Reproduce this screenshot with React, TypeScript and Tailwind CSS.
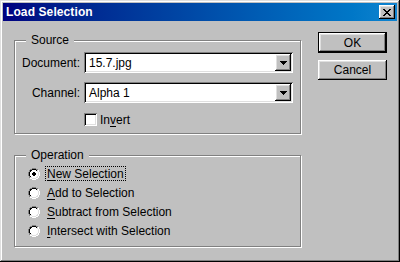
import React from "react";

const raised =
  "shadow-[inset_-1px_-1px_0_#000,inset_1px_1px_0_#fff,inset_-2px_-2px_0_#808080,inset_2px_2px_0_#dfdfdf]";
const sunken =
  "shadow-[inset_1px_1px_0_#808080,inset_-1px_-1px_0_#fff,inset_2px_2px_0_#000,inset_-2px_-2px_0_#dfdfdf]";

function CloseGlyph() {
  const rows = [
    "XX....XX",
    ".XX..XX.",
    "..XXXX..",
    "...XX...",
    "..XXXX..",
    ".XX..XX.",
    "XX....XX",
  ];
  const rects: React.ReactElement[] = [];
  rows.forEach((r, y) =>
    r.split("").forEach((c, x) => {
      if (c === "X") rects.push(<rect key={`${x}-${y}`} x={x} y={y} width={1} height={1} fill="#000" />);
    })
  );
  return (
    <svg width="8" height="7" viewBox="0 0 8 7" shapeRendering="crispEdges">
      {rects}
    </svg>
  );
}

function Arrow() {
  return (
    <svg width="7" height="4" viewBox="0 0 7 4" shapeRendering="crispEdges">
      <rect x="0" y="0" width="7" height="1" fill="#000" />
      <rect x="1" y="1" width="5" height="1" fill="#000" />
      <rect x="2" y="2" width="3" height="1" fill="#000" />
      <rect x="3" y="3" width="1" height="1" fill="#000" />
    </svg>
  );
}

function Radio({ checked }: { checked?: boolean }) {
  const outer: [number, number][] = [];
  const inner: [number, number][] = [];
  const add = (arr: [number, number][], y: number, xs: number[]) => xs.forEach((x) => arr.push([x, y]));
  add(outer, 0, [4, 5, 6, 7]);
  add(outer, 1, [2, 3, 8, 9]);
  add(outer, 2, [1, 10]);
  add(outer, 3, [1, 10]);
  for (let y = 4; y <= 7; y++) add(outer, y, [0, 11]);
  add(outer, 8, [1, 10]);
  add(outer, 9, [1, 10]);
  add(outer, 10, [2, 3, 8, 9]);
  add(outer, 11, [4, 5, 6, 7]);

  add(inner, 1, [4, 5, 6, 7]);
  add(inner, 2, [2, 3, 8, 9]);
  add(inner, 3, [2, 9]);
  for (let y = 4; y <= 7; y++) add(inner, y, [1, 10]);
  add(inner, 8, [2, 9]);
  add(inner, 9, [2, 3, 8, 9]);
  add(inner, 10, [4, 5, 6, 7]);

  const fill: [number, number, number][] = [
    [2, 4, 4],
    [3, 3, 6],
    [4, 2, 8],
    [5, 2, 8],
    [6, 2, 8],
    [7, 2, 8],
    [8, 3, 6],
    [9, 4, 4],
  ];
  return (
    <svg width="12" height="12" viewBox="0 0 12 12" shapeRendering="crispEdges" className="shrink-0">
      {fill.map(([y, x, w]) => (
        <rect key={`f${y}`} x={x} y={y} width={w} height={1} fill="#fff" />
      ))}
      {outer.map(([x, y]) => (
        <rect key={`o${x}-${y}`} x={x} y={y} width={1} height={1} fill={x + y <= 10 ? "#808080" : "#fff"} />
      ))}
      {inner.map(([x, y]) => (
        <rect key={`i${x}-${y}`} x={x} y={y} width={1} height={1} fill={x + y <= 10 ? "#000" : "#dfdfdf"} />
      ))}
      {checked && (
        <g fill="#000">
          <rect x="5" y="4" width="2" height="1" />
          <rect x="4" y="5" width="4" height="2" />
          <rect x="5" y="7" width="2" height="1" />
        </g>
      )}
    </svg>
  );
}

function Combo({ value }: { value: string }) {
  return (
    <div className={`ml-[4px] w-[209px] h-[21px] bg-white flex items-center justify-between pl-[5px] pr-[2px] ${sunken}`}>
      <span className="text-black">{value}</span>
      <div className={`w-[16px] h-[17px] bg-[#c0c0c0] flex items-center justify-center ${raised}`}>
        <Arrow />
      </div>
    </div>
  );
}

function RadioRow({ label, checked, focused }: { label: React.ReactNode; checked?: boolean; focused?: boolean }) {
  return (
    <div className="h-[19px] flex items-center">
      <Radio checked={checked} />
      <span
        className={`ml-[5px] px-[1px] h-[15px] flex items-center leading-none border border-dotted ${
          focused ? "border-black" : "border-transparent"
        }`}
      >
        {label}
      </span>
    </div>
  );
}

function GroupLabel({ text }: { text: string }) {
  return (
    <span className="absolute left-[11px] top-[-8px] px-[5px] bg-[#c0c0c0] leading-[14px] text-black">{text}</span>
  );
}

export default function App() {
  return (
    <div className="w-[400px] h-[262px] overflow-hidden bg-[#c0c0c0] p-[3px] font-['Liberation_Sans',Arial,sans-serif] text-[12px] text-black shadow-[inset_-1px_-1px_0_#000,inset_1px_1px_0_#dfdfdf,inset_-2px_-2px_0_#808080,inset_2px_2px_0_#fff]">
      <div className="h-[18px] bg-linear-to-r from-[#000080] to-[#1084d0] flex items-center justify-between pl-[3px] pr-[2px]">
        <span className="text-white font-bold text-[12px] leading-none tracking-[0.1px]">Load Selection</span>
        <div className={`w-[16px] h-[14px] bg-[#c0c0c0] flex items-center justify-center ${raised}`}>
          <CloseGlyph />
        </div>
      </div>
      <div className="flex pl-[11px]">
        <div className="w-[288px] flex flex-col">
          <div className="relative mt-[19px] w-[287px] h-[94px] border border-[#808080] shadow-[inset_1px_1px_0_#fff,1px_1px_0_#fff]">
            <GroupLabel text="Source" />
            <div className="mt-[11px] flex items-center">
              <span className="w-[65px] text-right">Document:</span>
              <Combo value="15.7.jpg" />
            </div>
            <div className="mt-[9px] flex items-center">
              <span className="w-[65px] text-right">Channel:</span>
              <Combo value="Alpha 1" />
            </div>
            <div className="mt-[10px] h-[13px] flex items-center pl-[69px]">
              <div className={`w-[13px] h-[13px] shrink-0 bg-white ${sunken}`} />
              <span className="ml-[3px] leading-none">
                In<span className="underline underline-offset-[2px]">v</span>ert
              </span>
            </div>
          </div>
          <div className="relative mt-[21px] w-[287px] h-[92px] border border-[#808080] shadow-[inset_1px_1px_0_#fff,1px_1px_0_#fff] pt-[8px] pl-[13px]">
            <GroupLabel text="Operation" />
            <RadioRow
              checked
              focused
              label={
                <>
                  <span className="underline underline-offset-[2px]">N</span>ew Selection
                </>
              }
            />
            <RadioRow
              label={
                <>
                  <span className="underline underline-offset-[2px]">A</span>dd to Selection
                </>
              }
            />
            <RadioRow
              label={
                <>
                  <span className="underline underline-offset-[2px]">S</span>ubtract from Selection
                </>
              }
            />
            <RadioRow
              label={
                <>
                  <span className="underline underline-offset-[2px]">I</span>ntersect with Selection
                </>
              }
            />
          </div>
        </div>
        <div className="ml-[16px] mt-[11px] flex flex-col">
          <div className="w-[69px] h-[21px] border border-black">
            <div className={`w-full h-full flex items-center justify-center ${raised}`}>OK</div>
          </div>
          <div className={`mt-[7px] w-[69px] h-[20px] flex items-center justify-center ${raised}`}>Cancel</div>
        </div>
      </div>
    </div>
  );
}
